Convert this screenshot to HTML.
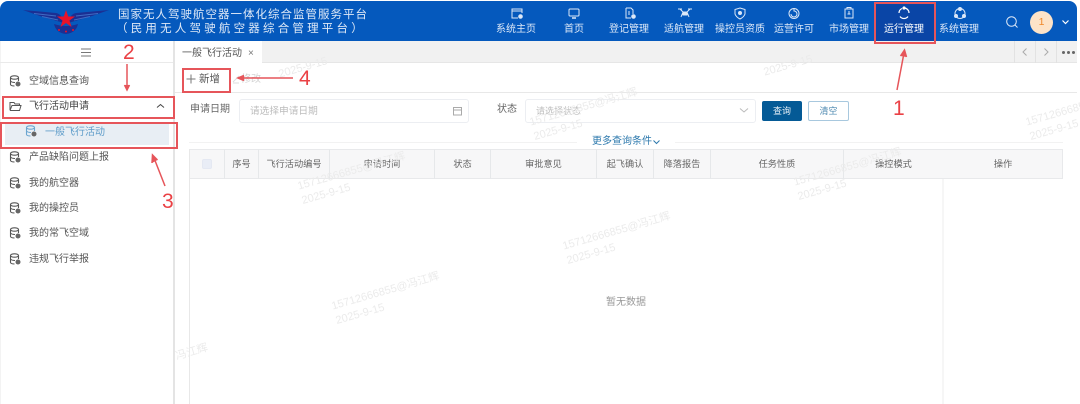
<!DOCTYPE html>
<html lang="zh"><head><meta charset="utf-8">
<style>
*{box-sizing:border-box}
html,body{margin:0;padding:0;background:#fff}
#p{position:relative;width:1080px;height:404px;overflow:hidden;background:#fff;font-family:"Liberation Sans","Noto Sans CJK SC",sans-serif;color:#555;filter:blur(.35px)}
.a{position:absolute;white-space:nowrap}
.nav{position:absolute;top:23px;width:70px;text-align:center;color:#dce8f8;font-size:10px;line-height:14px}
.ico{position:absolute;top:6px}
.side{position:absolute;left:29px;font-size:10px;line-height:14px;color:#555;white-space:nowrap}
.sic{position:absolute;left:9px}
.th{position:absolute;top:149px;height:30px;line-height:30px;text-align:center;font-size:9.2px;color:#666;border-right:1px solid #e6e8ea}
.wm{position:absolute;color:#ebebeb;font-size:11px;line-height:15px;transform:rotate(-16deg);transform-origin:0 0;white-space:nowrap}
.red{position:absolute;border:2px solid #e6555a}
.num{position:absolute;color:#ea4145;font-size:21px;line-height:24px}
</style></head><body>
<div id="p">
<!-- header -->
<div class="a" style="left:0;top:1px;width:1077px;height:40px;background:#0559bd;border-radius:8px 8px 0 0"></div>
<svg class="a" style="left:20px;top:6px" width="92" height="30" viewBox="0 0 92 30">
<path d="M3 4 L36 7 Q42 8 44 17 Q30 13 20 10 Z" fill="#1b2f93"/>
<path d="M89 4 L56 7 Q50 8 48 17 Q62 13 72 10 Z" fill="#1b2f93"/>
<path d="M14 7.500 L36 10 M22 10.500 L38 14 M78 7.500 L56 10 M70 10.500 L54 14" stroke="#3f6cc4" stroke-width="1"/>
<path d="M34 18 Q46 22 58 18 Q56 27 46 28 Q36 27 34 18Z" fill="#1b2f93"/>
<path d="M46 4 L48.200 10.500 L55 10.500 L49.500 14.500 L51.500 21 L46 17 L40.500 21 L42.500 14.500 L37 10.500 L43.800 10.500 Z" fill="#e8132a"/>
<circle cx="39" cy="24" r="1" fill="#e8132a"/><circle cx="46" cy="25.500" r="1" fill="#e8132a"/><circle cx="53" cy="24" r="1" fill="#e8132a"/>
</svg>
<div class="a" style="left:118px;top:8px;font-size:11.500px;line-height:14px;color:#dfe9f7;letter-spacing:1px">国家无人驾驶航空器一体化综合监管服务平台</div>
<div class="a" style="left:116px;top:22px;font-size:11.500px;line-height:14px;color:#dfe9f7;letter-spacing:3.200px">（民用无人驾驶航空器综合管理平台）</div>

<div class="a" style="left:875px;top:2px;width:60px;height:41px;background:#0a45a6"></div>

<div class="nav" style="left:481px">系统主页</div>
<div class="nav" style="left:539px">首页</div>
<div class="nav" style="left:594px">登记管理</div>
<div class="nav" style="left:649px">适航管理</div>
<div class="nav" style="left:705px">操控员资质</div>
<div class="nav" style="left:759px">运营许可</div>
<div class="nav" style="left:814px">市场管理</div>
<div class="nav" style="left:869px;color:#fff">运行管理</div>
<div class="nav" style="left:924px">系统管理</div>

<svg class="ico" style="left:510px" width="14" height="14" fill="none" stroke="#dce8f8" stroke-width="1"><path d="M12 7V3H2V12H8M2 5H12"/><circle cx="10.500" cy="10.500" r="1.800" fill="#dce8f8"/></svg>
<svg class="ico" style="left:567px" width="14" height="14" fill="none" stroke="#dce8f8" stroke-width="1"><rect x="2" y="3" width="10" height="7" rx="1"/><path d="M5 12H9" stroke-width="1.500"/></svg>
<svg class="ico" style="left:623px" width="14" height="14" fill="none" stroke="#dce8f8" stroke-width="1"><path d="M3 2H8L10 4V8M3 2V12H8M5 6H7M5 8H7"/><circle cx="10.500" cy="10.500" r="1.800" fill="#dce8f8"/></svg>
<svg class="ico" style="left:677px" width="16" height="14" fill="none" stroke="#dce8f8" stroke-width="1"><path d="M1 3H5M11 3H15M3 3L6 6H10L13 3M6 6L4 11M10 6L12 11"/><rect x="6" y="6" width="4" height="3" fill="#dce8f8"/></svg>
<svg class="ico" style="left:733px" width="14" height="14" fill="none" stroke="#dce8f8" stroke-width="1"><path d="M7 2L12 3.500V8Q11 11 7 13Q3 11 2 8V3.500Z"/><circle cx="7" cy="7" r="1.500" fill="#dce8f8"/></svg>
<svg class="ico" style="left:787px" width="14" height="14" fill="none" stroke="#dce8f8" stroke-width="1"><circle cx="7" cy="7.500" r="5"/><path d="M7 2V5A3 3 0 1 1 4 8"/></svg>
<svg class="ico" style="left:842px" width="14" height="14" fill="none" stroke="#dce8f8" stroke-width="1"><rect x="3" y="3" width="8" height="9"/><path d="M7 5V8M5.500 8H8.500M5 3V1.500H9V3"/></svg>
<svg class="ico" style="left:897px" width="14" height="14" fill="none" stroke="#fff" stroke-width="1.200"><path d="M7 2A5 5 0 0 1 12 7M11 10.500A5 5 0 0 1 3 10.500M2 7A5 5 0 0 1 5 2.500"/><circle cx="7" cy="2" r="1" fill="#fff"/></svg>
<svg class="ico" style="left:953px" width="14" height="14" fill="none" stroke="#dce8f8" stroke-width="1"><circle cx="7" cy="7.500" r="5"/><circle cx="7" cy="3" r="1.500" fill="#dce8f8"/><circle cx="3" cy="10" r="1.500" fill="#dce8f8"/><circle cx="11" cy="10" r="1.500" fill="#dce8f8"/></svg>

<svg class="a" style="left:1005px;top:15px" width="14" height="14" fill="none" stroke="#dfe9f7" stroke-width="1"><circle cx="6.500" cy="6.500" r="4.800"/><path d="M10 10L12.500 12.500"/></svg>
<div class="a" style="left:1030px;top:11px;width:23px;height:23px;border-radius:50%;background:#fde3c8;color:#f0882a;font-size:10.500px;line-height:23px;text-align:center">1</div>
<svg class="a" style="left:1061px;top:19px" width="9" height="7" fill="none" stroke="#fff" stroke-width="1.200"><path d="M1.500 1.500L4.500 4.500L7.500 1.500"/></svg>

<!-- sidebar -->
<div class="a" style="left:0;top:41px;width:1px;height:363px;background:#f3f3f3"></div>
<div class="a" style="left:173px;top:41px;width:2px;height:363px;background:#e4e4e4"></div>
<div class="a" style="left:0;top:62px;width:173px;height:1px;background:#eaeaea"></div>
<svg class="a" style="left:80px;top:47px" width="12" height="11" stroke="#777" stroke-width="1"><path d="M1 2H11M1 5.500H11M1 9H11"/></svg>

<div class="a" style="left:5px;top:122px;width:164px;height:23px;background:#e8eef4"></div>

<div class="side" style="top:75px">空域信息查询</div>
<div class="side" style="top:100px;color:#444">飞行活动申请</div>
<div class="side" style="top:126px;left:45px;color:#5e9cc9">一般飞行活动</div>
<div class="side" style="top:151px">产品缺陷问题上报</div>
<div class="side" style="top:177px">我的航空器</div>
<div class="side" style="top:202px">我的操控员</div>
<div class="side" style="top:227px">我的常飞空域</div>
<div class="side" style="top:253px">违规飞行举报</div>

<svg width="0" height="0" style="position:absolute"><defs><g id="db" fill="none" stroke-width="1.100"><ellipse cx="5.500" cy="2.500" rx="4" ry="1.700"/><path d="M1.500 2.500V9.500Q2 11 5.500 11M1.500 6Q2.500 7.500 6 7.500M9.500 2.500V6"/><circle cx="9" cy="9" r="2.500" fill="#666" stroke="none"/></g></defs></svg>
<svg class="sic" style="top:75px" width="13" height="13" stroke="#555"><use href="#db"/></svg>
<svg class="sic" style="top:151px" width="13" height="13" stroke="#555"><use href="#db"/></svg>
<svg class="sic" style="top:177px" width="13" height="13" stroke="#555"><use href="#db"/></svg>
<svg class="sic" style="top:202px" width="13" height="13" stroke="#555"><use href="#db"/></svg>
<svg class="sic" style="top:227px" width="13" height="13" stroke="#555"><use href="#db"/></svg>
<svg class="sic" style="top:253px" width="13" height="13" stroke="#555"><use href="#db"/></svg>
<svg class="sic" style="left:25px;top:125px" width="13" height="13" stroke="#6aa5d0"><use href="#db"/></svg>
<svg class="sic" style="top:100px" width="13" height="13" fill="none" stroke="#555" stroke-width="1"><path d="M1 10V2.500H5L6 4H10.500V5.500M1 10.500H10.500L12 5.500H3L1 10.500"/></svg>
<svg class="a" style="left:156px;top:103px" width="9" height="6" fill="none" stroke="#444" stroke-width="1"><path d="M1 4.500L4.500 1.500L8 4.500"/></svg>

<!-- tab bar -->
<div class="a" style="left:175px;top:41px;width:902px;height:22px;background:#f1f1f1;border-bottom:1px solid #e6e6e6"></div>
<div class="a" style="left:175px;top:41px;width:87px;height:23px;background:#fff"></div>
<div class="a" style="left:182px;top:47px;font-size:10px;line-height:14px;color:#555">一般飞行活动</div>
<div class="a" style="left:248px;top:47px;font-size:10px;line-height:14px;color:#777">×</div>
<div class="a" style="left:1014px;top:41px;width:1px;height:22px;background:#e2e2e2"></div>
<div class="a" style="left:1035px;top:41px;width:1px;height:22px;background:#e2e2e2"></div>
<div class="a" style="left:1056px;top:41px;width:1px;height:22px;background:#e2e2e2"></div>
<svg class="a" style="left:1021px;top:47px" width="8" height="10" fill="none" stroke="#aaa" stroke-width="1"><path d="M5.500 1.500L2 5L5.500 8.500"/></svg>
<svg class="a" style="left:1042px;top:47px" width="8" height="10" fill="none" stroke="#aaa" stroke-width="1"><path d="M2.500 1.500L6 5L2.500 8.500"/></svg>
<div class="a" style="left:1062px;top:51px;width:3px;height:3px;background:#666;box-shadow:5px 0 #666,10px 0 #666;border-radius:50%"></div>

<!-- toolbar -->
<svg class="a" style="left:186px;top:74px" width="10" height="10" stroke="#777" stroke-width="1"><path d="M5 0.500V9.500M0.500 5H9.500"/></svg>
<div class="a" style="left:199px;top:72px;font-size:10.500px;line-height:14px;color:#555">新增</div>
<svg class="a" style="left:231px;top:74px" width="10" height="10" fill="none" stroke="#ddd" stroke-width="1"><path d="M2 8L8 2M2 9H8"/></svg>
<div class="a" style="left:241px;top:73px;font-size:10px;line-height:14px;color:#d4d4d4">修改</div>
<div class="a" style="left:175px;top:92px;width:902px;height:1px;background:#e8e8e8"></div>

<!-- form -->
<div class="a" style="left:190px;top:103px;font-size:10px;line-height:14px;color:#666">申请日期</div>
<div class="a" style="left:239px;top:99px;width:230px;height:24px;border:1px solid #eceef2;border-radius:3px"></div>
<div class="a" style="left:250px;top:105px;font-size:9.700px;line-height:14px;color:#bcbcbc">请选择申请日期</div>
<svg class="a" style="left:452px;top:106px" width="11" height="10" fill="none" stroke="#aaa" stroke-width="1"><rect x="1.500" y="1.500" width="8" height="7.500"/><path d="M1.500 4H9.500"/></svg>
<div class="a" style="left:497px;top:103px;font-size:10px;line-height:14px;color:#666">状态</div>
<div class="a" style="left:525px;top:99px;width:231px;height:24px;border:1px solid #eceef2;border-radius:3px"></div>
<div class="a" style="left:536px;top:104px;font-size:9px;line-height:14px;color:#bcbcbc">请选择状态</div>
<svg class="a" style="left:739px;top:107px" width="10" height="7" fill="none" stroke="#bbb" stroke-width="1"><path d="M1 1.500L5 5L9 1.500"/></svg>
<div class="a" style="left:762px;top:101px;width:40px;height:20px;background:#045a96;border-radius:2px;color:#eaf2f8;font-size:9px;line-height:20px;text-align:center">查询</div>
<div class="a" style="left:808px;top:101px;width:41px;height:20px;border:1px solid #a8c8de;border-radius:2px;color:#4c88b0;font-size:9px;line-height:18px;text-align:center">清空</div>
<div class="a" style="left:189px;top:142px;width:388px;height:1px;background:#f2f2f2"></div>
<div class="a" style="left:675px;top:142px;width:388px;height:1px;background:#f2f2f2"></div>
<div class="a" style="left:592px;top:135px;font-size:10px;line-height:14px;color:#2d79ad">更多查询条件</div>
<svg class="a" style="left:653px;top:140px" width="7" height="5" fill="none" stroke="#2d79ad" stroke-width="1"><path d="M0.500 0.500L3.500 3.500L6.500 0.500"/></svg>

<!-- table -->
<div class="a" style="left:189px;top:149px;width:874px;height:30px;background:#f7f7f8;border:1px solid #e8e9eb"></div>
<div class="a" style="left:189px;top:149px;width:1px;height:255px;background:#e8e8e8"></div>
<div class="a" style="left:202px;top:159px;width:10px;height:10px;background:#e9edf6;border:1px solid #e4e8f2;border-radius:2px"></div>
<div class="th" style="left:190px;width:35px"></div>
<div class="th" style="left:225px;width:34px">序号</div>
<div class="th" style="left:259px;width:71px">飞行活动编号</div>
<div class="th" style="left:330px;width:105px">申请时间</div>
<div class="th" style="left:435px;width:56px">状态</div>
<div class="th" style="left:491px;width:106px">审批意见</div>
<div class="th" style="left:597px;width:57px">起飞确认</div>
<div class="th" style="left:654px;width:57px">降落报告</div>
<div class="th" style="left:711px;width:133px">任务性质</div>
<div class="th" style="left:844px;width:99px;border-right:0">操控模式</div>
<div class="th" style="left:943px;width:120px;border-right:0">操作</div>
<div class="a" style="left:942px;top:179px;width:2px;height:225px;background:#f6f6f6"></div>
<div class="a" style="left:606px;top:296px;font-size:10px;line-height:14px;color:#999">暂无数据</div>

<!-- watermarks -->
<div class="wm" style="left:762px;top:66px">2025-9-15</div>
<div class="wm" style="left:277px;top:68px">2025-9-15</div>
<div class="wm" style="left:528px;top:116px">15712666855@冯江辉<br>2025-9-15</div>
<div class="wm" style="left:1024px;top:116px">15712666855@冯江辉<br>2025-9-15</div>
<div class="wm" style="left:561px;top:240px">15712666855@冯江辉<br>2025-9-15</div>
<div class="wm" style="left:330px;top:300px">15712666855@冯江辉<br>2025-9-15</div>
<div class="wm" style="left:792px;top:176px">15712666855@冯江辉<br>2025-9-15</div>
<div class="wm" style="left:296px;top:180px">15712666855@冯江辉<br>2025-9-15</div>
<div class="wm" style="left:174px;top:350px">冯江辉</div>

<!-- annotations -->
<div class="red" style="left:874px;top:2px;width:62px;height:42px"></div>
<div class="red" style="left:2px;top:96px;width:173px;height:23px"></div>
<div class="red" style="left:0;top:122px;width:178px;height:27px"></div>
<div class="red" style="left:182px;top:68px;width:49px;height:25px"></div>
<svg class="a" style="left:0;top:0;pointer-events:none" width="1080" height="404" fill="none" stroke="#e6555a" stroke-width="1.500">
<path d="M897 90L904 53"/><path d="M900.500 56L904.500 50L906.500 57" fill="#e6555a"/>
<path d="M127 64V88"/><path d="M124.500 85L127 90L129.500 85" fill="#e6555a"/>
<path d="M165 186L154 158"/><path d="M152 163L152.500 155L157.500 160" fill="#e6555a"/>
<path d="M293 78H240"/><path d="M244 75.500L238 78L244 80.500" fill="#e6555a"/>
</svg>
<div class="num" style="left:893px;top:97px">1</div>
<div class="num" style="left:123px;top:41px">2</div>
<div class="num" style="left:162px;top:190px">3</div>
<div class="num" style="left:299px;top:67px">4</div>
</div>
</body></html>
